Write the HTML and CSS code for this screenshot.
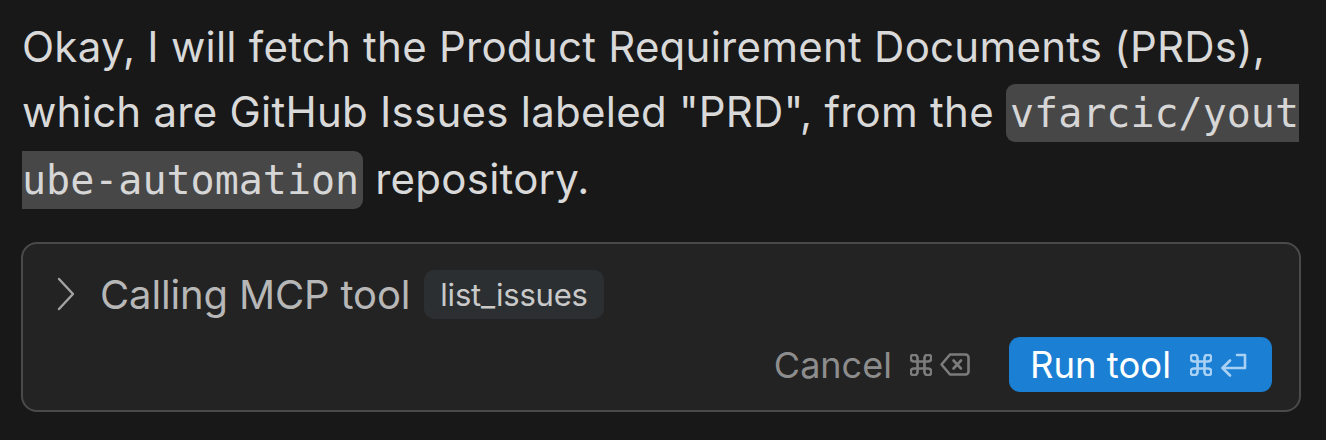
FILE: index.html
```html
<!DOCTYPE html>
<html lang="en">
<head>
<meta charset="utf-8">
<title>Chat</title>
<link rel="stylesheet" href="styles.css">
</head>
<body>
<main class="chat">
  <p class="message">Okay, I will fetch the Product Requirement Documents (PRDs), which are GitHub Issues labeled "PRD", from the <code class="inline-code">vfarcic/youtube-automation</code> repository.</p>
  <section class="tool-card">
    <div class="tool-header">
      <svg class="chevron" width="18" height="34" viewBox="0 0 18 34" fill="none" stroke="currentColor" stroke-width="2.4" stroke-linecap="round" stroke-linejoin="round"><path d="M2 2 L16 17 L2 32"/></svg>
      <span class="tool-label">Calling MCP tool</span>
      <span class="tool-name">list_issues</span>
    </div>
    <div class="tool-actions">
      <button class="btn-cancel" type="button">
        <span>Cancel</span>
        <span class="keys">
          <svg class="key-cmd" width="22" height="22" viewBox="2.5 2.5 19 19" fill="none" stroke="currentColor" stroke-width="2.3" stroke-linecap="round" stroke-linejoin="round"><path d="M15 6v12a3 3 0 1 0 3-3H6a3 3 0 1 0 3 3V6a3 3 0 1 0-3 3h12a3 3 0 1 0-3-3"/></svg>
          <svg class="key-del" width="30" height="23" viewBox="0 0 30 23" fill="none" stroke="currentColor" stroke-width="2.6" stroke-linecap="round" stroke-linejoin="round"><path d="M10 1.5h15.5a3 3 0 0 1 3 3v14a3 3 0 0 1-3 3H10L1.5 11.5z"/><path d="M13.5 7.5l7.5 8M21 7.5l-7.5 8"/></svg>
        </span>
      </button>
      <button class="btn-run" type="button">
        <span>Run tool</span>
        <span class="keys">
          <svg class="key-cmd" width="22" height="22" viewBox="2.5 2.5 19 19" fill="none" stroke="currentColor" stroke-width="2.3" stroke-linecap="round" stroke-linejoin="round"><path d="M15 6v12a3 3 0 1 0 3-3H6a3 3 0 1 0 3 3V6a3 3 0 1 0-3 3h12a3 3 0 1 0-3-3"/></svg>
          <svg class="key-ret" width="28" height="24" viewBox="0 0 28 24" fill="none" stroke="currentColor" stroke-width="2.6" stroke-linecap="round" stroke-linejoin="round"><path d="M17 2h8v13H3"/><path d="M10 7.5L2.5 15 10 22.5"/></svg>
        </span>
      </button>
    </div>
  </section>
</main>
</body>
</html>
```

FILE: styles.css
```css
* { box-sizing: border-box; }

html, body {
  margin: 0;
  padding: 0;
  background: #181818;
}

body {
  font-family: "Inter", "Liberation Sans", sans-serif;
  color: #d9d9d9;
}

.chat {
  width: 1326px;
  height: 440px;
  padding: 14px 26px 0 22px;
  overflow: hidden;
}

.message {
  margin: 0;
  font-size: 42px;
  line-height: 65px;
  letter-spacing: 0.25px;
}

.inline-code {
  font-family: "DejaVu Sans Mono", "Liberation Mono", monospace;
  font-size: 40px;
  letter-spacing: 0;
  background: #474747;
  color: #d6d6d6;
  border-radius: 9px;
  padding: 6px 4px 6px;
  word-break: break-all;
}

.tool-card {
  margin: 29px 0 0 -1px;
  width: 1280px;
  height: 170px;
  background: #232323;
  border: 2px solid #4a4a4a;
  border-radius: 16px;
  padding: 24px 27px 18px 34px;
  display: flex;
  flex-direction: column;
  justify-content: space-between;
}

.tool-header {
  display: flex;
  align-items: center;
  height: 52px;
}

.chevron {
  color: #a3a3a3;
  margin-right: 25px;
}

.tool-label {
  font-size: 40px;
  color: #b7b7b7;
  letter-spacing: -0.15px;
}

.tool-name {
  margin-left: 14px;
  background: #2b2f32;
  color: #c9c9c9;
  border-radius: 10px;
  font-size: 31px;
  letter-spacing: -0.2px;
  height: 49px;
  padding: 0 16px;
  display: flex;
  align-items: center;
}

.tool-actions {
  display: flex;
  justify-content: flex-end;
  align-items: center;
  gap: 39px;
}

.btn-cancel,
.btn-run {
  font-family: inherit;
  border: none;
  display: flex;
  align-items: center;
  font-size: 36px;
  letter-spacing: 0;
  cursor: pointer;
}

.btn-cancel {
  background: none;
  color: #8d8d8d;
  padding: 0;
  gap: 18px;
}

.btn-run {
  background: #1b7fd4;
  color: #ffffff;
  height: 55px;
  border-radius: 11px;
  padding: 0 24px 0 21px;
  font-size: 36.5px;
  gap: 19px;
}

.keys {
  display: flex;
  align-items: center;
  gap: 8px;
}

.btn-cancel .keys { color: #7c7c7c; }
.btn-run .keys { color: #a9d1f3; }
```
